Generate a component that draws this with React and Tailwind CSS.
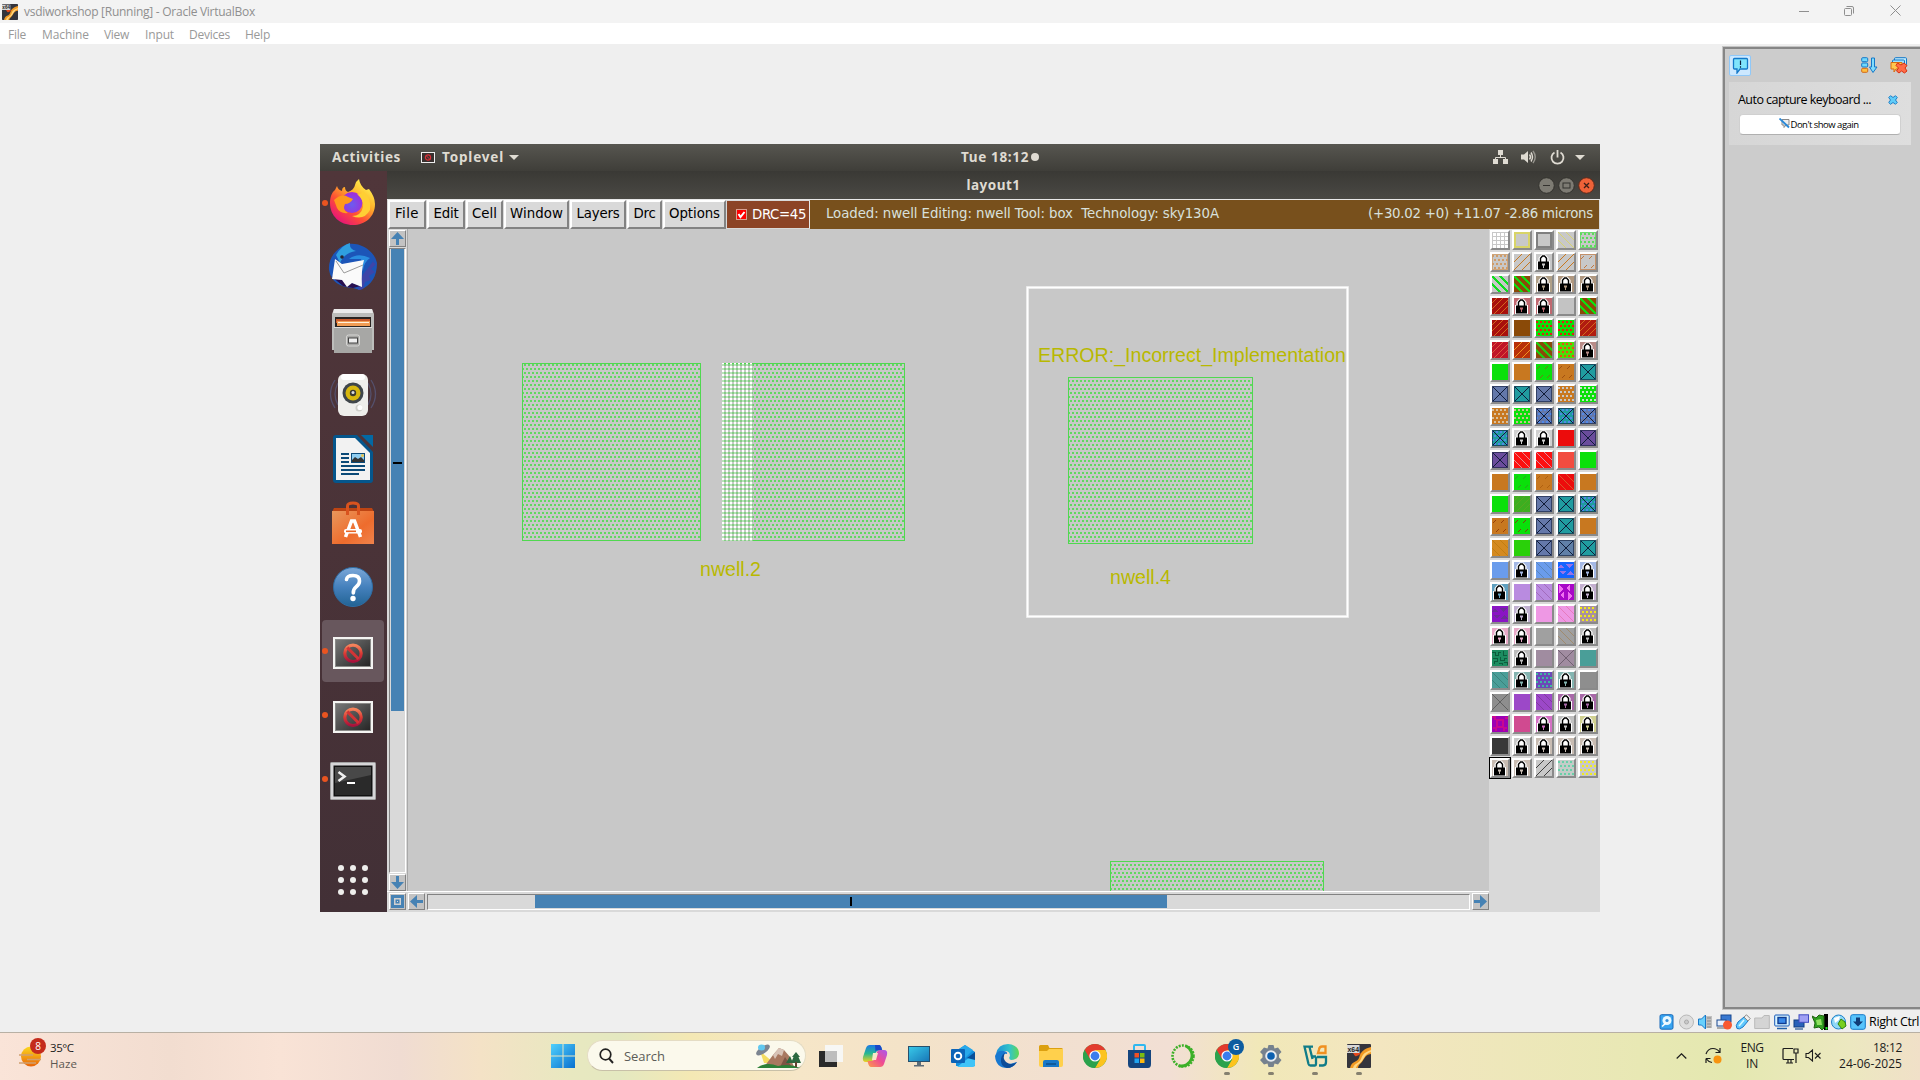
import React, { useLayoutEffect, useRef } from "react";

/* Text whose letter spacing is adjusted so that it fills a given width. */
function Fit({ w, className = "", children }) {
  const ref = useRef(null);
  useLayoutEffect(() => {
    const el = ref.current;
    el.style.letterSpacing = "0px";
    const natural = el.getBoundingClientRect().width;
    el.style.letterSpacing = (w - natural) / children.length + "px";
  }, [w, children]);
  return (
    <span ref={ref} className={"inline-block shrink-0 whitespace-pre " + className}>
      {children}
    </span>
  );
}

const segoe = "font-['Open_Sans',sans-serif]";
const ubuntu = "font-['Noto_Sans',sans-serif] font-bold";
const deja = "font-['DejaVu_Sans',sans-serif]";

/* ---------- small artwork ---------- */

function X64Icon({ size }) {
  return (
    <svg width={size} height={size} viewBox="0 0 24 24" className="shrink-0">
      <rect width="24" height="24" rx="1" fill="#34343c" />
      <path d="M3 24 C5 16 10 19 12 14 C14 7 17 5 24 3 V10 C17 11 18 15 14 19 C12 21 11 22 11 24Z" fill="#f29a24" />
      <path d="M6 24 C7 19 12 20 14 15 C16 9 19 8 24 6 V8 C18 10 18 13 15 17 C13 20 10 20 9 24Z" fill="#ffd884" />
      <path d="M6 9 H14 Q11 13 8 12Z" fill="#e3471c" />
      <rect x="0" y="1" width="12.5" height="8" fill="#d8d8d8" />
      <text x="0.5" y="8" fontSize="8" fontWeight="bold" fontFamily="Liberation Sans, sans-serif" textLength="11.5" lengthAdjust="spacingAndGlyphs" fill="#222">x64</text>
    </svg>
  );
}

function Prohibit() {
  return (
    <svg width="40" height="32" viewBox="0 0 40 32">
      <defs>
        <linearGradient id="scr" x1="0" y1="0" x2="1" y2="1">
          <stop offset="0" stopColor="#777" /><stop offset="1" stopColor="#262626" />
        </linearGradient>
        <linearGradient id="ban" x1="0" y1="0" x2="0" y2="1">
          <stop offset="0" stopColor="#f4845c" /><stop offset=".5" stopColor="#dc3b34" /><stop offset="1" stopColor="#a8123c" />
        </linearGradient>
      </defs>
      <rect width="40" height="32" fill="#f4f4f2" />
      <rect x="2" y="2" width="36" height="28" fill="#8a8a88" />
      <rect x="3" y="3" width="34" height="26" fill="url(#scr)" />
      <circle cx="20" cy="16.3" r="8.2" fill="none" stroke="url(#ban)" strokeWidth="3.2" />
      <path d="M14.3 10.6 L25.7 22" stroke="#d23436" strokeWidth="3" />
    </svg>
  );
}

const dockArt = {
  firefox: (
    <svg width="48" height="48" viewBox="1 1 48 48">
      <defs>
        <linearGradient id="ff" x1=".85" y1=".1" x2=".2" y2=".95">
          <stop offset="0" stopColor="#fff44f" /><stop offset=".35" stopColor="#ffb02a" /><stop offset=".65" stopColor="#ff5034" /><stop offset="1" stopColor="#e5127c" />
        </linearGradient>
        <radialGradient id="ffp" cx=".5" cy=".6" r=".6">
          <stop offset="0" stopColor="#6b5cf0" /><stop offset="1" stopColor="#a32bd8" />
        </radialGradient>
      </defs>
      <path d="M9 8 Q10 12 14 13 Q14 9 17 9 Q17 13 20 14 Q26 12 27 7 Q28 3 31 1 Q32 8 38 12 L41 11 Q47 19 47 26 C47 39 37 47 25 47 C12 47 2 38 2 25 C2 19 4 14 7 12 Q8 10 9 8Z" fill="url(#ff)" />
      <circle cx="24" cy="24.5" r="10.5" fill="url(#ffp)" />
      <path d="M6 22 Q14 15 20 19 L25 21 Q22 26 17 26 Q14 32 20 35 Q12 36 9 30Z" fill="#ff9a1c" />
      <path d="M29 16 Q36 22 35 29 Q33 38 24 38 Q36 43 42 32 Q44 20 35 13 Q33 17 29 16Z" fill="#ffcf34" />
    </svg>
  ),
  thunderbird: (
    <svg width="50" height="50" viewBox="0 0 50 50">
      <path d="M1 28 C3 40 12 45 25 46 L32 48 C44 43 49 34 49 21 C46 8 32 0 20 2 C8 6 0 16 1 28Z" fill="#1c55b8" />
      <path d="M49 14 L45 20 L48 22 L43 27 L47 30 L41 34 L43 38 L37 40 L35 47 L30 48 L34 34Z" fill="#3e45a8" />
      <path d="M3 34 L33 44 L25 46 L15 44Z" fill="#281050" />
      <path d="M8 13 Q14 3 22 1 Q21 7 28 9 Q16 11 12 21Z" fill="#2f9fe0" />
      <path d="M21 17 Q30 10 42 16 Q36 20 35 28 L33 17Z" fill="#2a8de0" />
      <path d="M7 17 L14 22 L36 18 Q33 28 34 45 L24 41 L19 45 L14 38 L4 37 Z" fill="#fafafa" />
      <path d="M8 19 L16 31 L35 23" fill="none" stroke="#9a9a9a" strokeWidth="1" />
      <circle cx="14" cy="15" r="1.8" fill="#2a2430" />
    </svg>
  ),
  files: (
    <svg width="42" height="46" viewBox="0 0 42 46">
      <path d="M2 1 H40 L42 6 V42 H0 V6Z" fill="#bdbdbb" />
      <path d="M2 1 H40 L41 5 H1Z" fill="#ecebeb" />
      <rect x="3" y="9" width="36" height="10" fill="#2a2422" />
      <rect x="4" y="11" width="34" height="4" fill="#c95a2c" />
      <rect x="5" y="13" width="33" height="5" fill="#f09c54" />
      <rect x="6" y="14" width="31" height="1" fill="#fff0dc" />
      <rect x="2" y="19" width="38" height="26" fill="#a7a7a5" />
      <rect x="2" y="19" width="38" height="1" fill="#ddd" />
      <rect x="14.500" y="27" width="13" height="11" rx="2" fill="#a7a7a5" stroke="#d6d6d4" />
      <rect x="16.500" y="30" width="9" height="5" fill="#eee" stroke="#444" />
    </svg>
  ),
  rhythmbox: (
    <svg width="48" height="46" viewBox="0 0 48 46">
      <path d="M6 8 Q-3 22 6 36 M42 8 Q51 22 42 36 M9 11 Q3 22 9 33 M39 11 Q45 22 39 33" fill="none" stroke="#54506c" strokeWidth="1.300" />
      <rect x="9" y="2" width="30" height="42" rx="6" fill="#eeeeeb" />
      <rect x="12" y="2" width="24" height="6" rx="3" fill="#fff" />
      <circle cx="24" cy="21" r="10.500" fill="#3f464a" />
      <circle cx="24" cy="21" r="7.500" fill="#d8b80e" />
      <circle cx="24" cy="21" r="3.200" fill="#3a3a32" />
      <circle cx="24" cy="20.500" r="1.500" fill="#ddd" />
      <circle cx="30" cy="36" r="3.500" fill="#cfcfca" />
      <circle cx="31" cy="35.500" r="2.600" fill="#fff" />
    </svg>
  ),
  writer: (
    <svg width="40" height="48" viewBox="0 0 40 48">
      <path d="M3 0 H24 L40 17 V45 Q40 48 37 48 H3 Q0 48 0 45 V3 Q0 0 3 0Z" fill="#05568c" />
      <path d="M28 0 H40 V12Z" fill="#0369a3" />
      <path d="M3 3 H22 L37 18 V45 H3Z" fill="#f2f2f2" />
      <path d="M8 19 H16 M8 23 H16 M8 27 H16 M8 31 H32 M8 35 H32 M8 39 H26" stroke="#0b4a78" strokeWidth="2" />
      <rect x="18" y="18" width="14" height="10" fill="#0b4a78" />
      <rect x="19" y="19" width="12" height="8" fill="#8fcdf0" />
      <path d="M19 27 V25 L22 22 L25 24 L28 22 L31 25 V27Z" fill="#333" />
      <circle cx="29.500" cy="20.500" r="1.500" fill="#e8c44c" />
    </svg>
  ),
  software: (
    <svg width="42" height="44" viewBox="0 0 42 44">
      <defs>
        <linearGradient id="bag" x1="0" y1="0" x2="1" y2="1">
          <stop offset="0" stopColor="#e9975c" /><stop offset=".6" stopColor="#ee6c2d" /><stop offset="1" stopColor="#f0834c" />
        </linearGradient>
      </defs>
      <path d="M2 7 H40 L42 11 H0Z" fill="#bd4413" />
      <rect y="10" width="42" height="33" fill="url(#bag)" />
      <path d="M15.500 14 V5 Q15.500 2 21 2 Q26.500 2 26.500 5 V14" fill="none" stroke="#d9531e" strokeWidth="3" />
      <path d="M13.500 36 L19.500 20 H22.500 L28.500 36" fill="none" stroke="#fff" strokeWidth="3.500" />
      <rect x="12" y="28" width="18" height="4.500" rx="2" fill="#fff" />
      <rect x="14" y="29.500" width="10" height="1.600" fill="#ea6424" />
    </svg>
  ),
  help: (
    <svg width="42" height="42" viewBox="0 0 42 42">
      <defs>
        <linearGradient id="hp" x1="0" y1="0" x2="0" y2="1">
          <stop offset="0" stopColor="#7ba7d8" /><stop offset=".5" stopColor="#4581bd" /><stop offset="1" stopColor="#226394" />
        </linearGradient>
      </defs>
      <circle cx="21" cy="21" r="19.500" fill="url(#hp)" stroke="#2e6da4" />
      <path d="M14.500 13.500 Q15 9.500 21 9.500 Q27.500 9.500 27.500 15 Q27.500 18.500 24 21 Q21.300 23 21.300 27" fill="none" stroke="#fff" strokeWidth="3.600" strokeLinecap="round" />
      <circle cx="21" cy="32.500" r="2.700" fill="#fff" />
    </svg>
  ),
  banned: <Prohibit />,
  terminal: (
    <svg width="46" height="38" viewBox="0 0 46 38">
      <rect width="46" height="38" rx="1.500" fill="#a3a3a3" />
      <rect x="1" y="1" width="44" height="36" fill="#d6d6d8" />
      <rect x="3.500" y="3.500" width="39" height="31" fill="#111" />
      <rect x="5" y="5" width="36" height="28" fill="#2a2a2a" />
      <path d="M5 5 H41 V13 L5 21Z" fill="#484848" />
      <path d="M8.500 10 L14.500 14.500 L8.500 19" fill="none" stroke="#f0f0f0" strokeWidth="2.600" />
      <path d="M17 21 H25" stroke="#fff" strokeWidth="2" />
    </svg>
  ),
};

const dockItems = [
  ["firefox", true], ["thunderbird"], ["files"], ["rhythmbox"], ["writer"], ["software"], ["help"],
  ["banned", true, true], ["banned", true], ["terminal", true],
];

function Dock() {
  return (
    <div className="flex w-[67px] shrink-0 flex-col bg-gradient-to-b from-[#50363a] via-[#4a3338] to-[#423036]">
      {dockItems.map(([kind, running, active], i) => (
        <div key={i} className="relative flex h-16 w-[66px] items-center justify-center">
          {active && <div className="absolute top-[1px] left-[2px] h-[62px] w-[62px] rounded-[4px] bg-[#68575d]" />}
          {running && <div className="absolute top-[29px] left-[2px] h-[6px] w-[6px] rounded-full bg-[#ea5420]" />}
          <div className={kind === "banned" || kind === "terminal" ? "relative pt-[3px]" : "relative"}>{dockArt[kind]}</div>
        </div>
      ))}
      <div className="mt-[54px] ml-[18px] grid w-[30px] grid-cols-3 gap-[6px]">
        {Array.from({ length: 9 }, (_, i) => (
          <div key={i} className="h-[6px] w-[6px] rounded-full bg-[#eeeeec]" />
        ))}
      </div>
    </div>
  );
}

/* ---------- layer palette ---------- */

const G = "#0ae00a", O = "#c87820", C = "#c8c8c8", B = "#6478aa", T = "#209ca0", R = "#a8100c", V = "#6a4c9c", BR = "#8a4a08", LB = "#c8bcb2";
const rows = [
  [["grid", C, "#fff"], ["box", C, "#d8d468"], ["box", C, "#808080"], ["bs", C, "#d8d468"], ["dotbox", C, "#5cdc5c"]],
  [["dotbox", C, "#d09c68"], ["fs2", C, O], ["lock", C], ["fs2", C, O], ["dashbox", C, "#c07840"]],
  [["bs2", C, "#10dc20"], ["bs2", BR, "#10dc10"], ["lock", "#b0a088"], ["lock", "#b09880"], ["lock", "#b09880"]],
  [["fs", R, "#d87020"], ["lock", "#c06870"], ["lock", "#c06870"], ["solid", "#c3c3c3"], ["bs2", BR, "#10dc10"]],
  [["fs", R, "#d87020"], ["solid", BR], ["dot", G, "#e02010"], ["dot", G, "#e02010"], ["fs", "#b01c10", "#d87020"]],
  [["fs", "#c01428", "#e06040"], ["fs2", "#b83008", "#f09020"], ["bs2", BR, "#20cc10"], ["dot", "#48e008", "#e85010"], ["lock", "#b88c88"]],
  [["solid", G], ["solid", O], ["dash", G, "#707818"], ["dash", O, "#a05010"], ["x", T]],
  [["x", B], ["x", T], ["x", B], ["dot", O, "#c8c8c8"], ["dot", G, "#c8e0c8"]],
  [["dot", O, "#d8c0a0"], ["dot", G, "#c8c090"], ["xd", B], ["xd", T], ["xd", B]],
  [["xd", T], ["lock", "#d0d0d0"], ["lock", "#d0d0d0"], ["solid", "#ec0c0c"], ["x", V]],
  [["x", V], ["bs", "#fc1010", "#e0a0a0"], ["bs", "#fc1010", "#d8a0b8"], ["solid", "#f24c40"], ["solid", G]],
  [["solid", O], ["dash", G, "#30a020"], ["dash", O, "#b06010"], ["bs", "#ec0c0c", "#d86030"], ["solid", O]],
  [["solid", G], ["fs", "#3cae20", "#58a820"], ["x", B], ["x", T], ["xd", T]],
  [["dash", O, "#984008"], ["dash", G, "#804010"], ["x", B], ["x", T], ["solid", O]],
  [["bs", "#d48a20", "#c07c10"], ["solid", "#2ad00a"], ["x", B], ["x", "#6080a8"], ["x", T]],
  [["solid", "#6a9cec"], ["lock", "#a4b8e4"], ["bs", "#6a9cec", "#5884b8"], ["tri", "#1464ff", "#9474e8"], ["lock", "#a4b8e4"]],
  [["lock", "#60a0c0"], ["solid", "#b98be0"], ["bs", "#b98be0", "#a068b8"], ["tri2", "#a808c8", "#f070f0"], ["lock", "#c4b0d0"]],
  [["tri", "#8a14c4", "#6c2c98"], ["lock", "#c0b0d0"], ["solid", "#ee98e4"], ["bs", "#ee98e4", "#e478b8"], ["dot", "#a890a0", "#f0e818"]],
  [["lock", "#e8a8c8"], ["lock", "#e8a8c8"], ["solid", "#a0a0a0"], ["bs", "#a0a0a0", "#a08868"], ["lock", "#bcbcbc"]],
  [["noise", "#1c8c60", "#0c5c3c"], ["lock", "#bcbcbc"], ["solid", "#a08ca0"], ["xs", "#a08ca0", "#706070"], ["solid", "#4a9e98"]],
  [["bs", "#4a9e98", "#388078"], ["lock", "#84b4b0"], ["dot", "#6c48b8", "#40b8a0"], ["lock", "#84b4b0"], ["solid", "#8e8e8e"]],
  [["xs", "#8e8e8e", "#606060"], ["solid", "#9c48c8"], ["bs", "#9c48c8", "#80389c"], ["lock", "#a868a8"], ["lock", "#a868a8"]],
  [["noise2", "#9c00b4", "#c80890"], ["solid", "#d04a90"], ["lock", "#d470c4"], ["lock", "#c0c0c0"], ["lock", "#d0d090"]],
  [["solid", "#383838"], ["lock", "#c8c8c8"], ["lock", LB], ["lock", LB], ["lock", LB]],
  [["lock", LB, "", true], ["lock", LB], ["fs2", C, "#404040"], ["dot", "#c4ccc8", "#68d0a8"], ["dot", C, "#f0ec20"]],
];

function dots(color) {
  const out = [];
  for (let r = 0; r < 4; r++)
    for (let c = 0; c < 4; c++) out.push(<rect key={r * 4 + c} x={c * 4 + (r % 2 ? 2 : 0)} y={r * 4 + 1} width="2" height="2" fill={color} />);
  return out;
}

const forward = "M-1 9 L9 -1 M-1 17 L17 -1 M7 17 L17 7";
const backward = "M-1 7 L9 17 M-1 -1 L17 17 M7 -1 L17 9";

function Swatch({ kind, bg, fg }) {
  let art = null;
  const dashes = <path d="M1 5 L4 2 M9 5 L12 2 M4 14 L7 11 M11 14 L14 11" stroke={fg} strokeWidth="1.200" />;
  if (kind === "grid") {
    art = [];
    for (let i = 0; i < 16; i++) art.push(<rect key={i} x={(i % 4) * 4 + 1} y={Math.floor(i / 4) * 4 + 1} width="3" height="3" fill={fg} />);
  } else if (kind === "box") art = <rect x="1" y="1" width="14" height="14" fill="none" stroke={fg} strokeWidth="2" />;
  else if (kind === "dot") art = dots(fg);
  else if (kind === "dotbox") art = <>{dots(fg)}<rect x=".5" y=".5" width="15" height="15" fill="none" stroke={fg} opacity=".8" /></>;
  else if (kind === "fs") art = <path d="M-1 6 L6 -1 M-1 12 L12 -1 M1 17 L17 1 M7 17 L17 7" stroke={fg} strokeWidth=".9" />;
  else if (kind === "fs2") art = <path d={forward} stroke={fg} strokeWidth="1.400" />;
  else if (kind === "bs") art = <path d={backward} stroke={fg} strokeWidth=".9" />;
  else if (kind === "bs2") art = <path d={backward} stroke={fg} strokeWidth="1.600" />;
  else if (kind === "dash") art = dashes;
  else if (kind === "dashbox") art = <>{dashes}<rect x=".5" y=".5" width="15" height="15" fill="none" stroke={fg} opacity=".7" /></>;
  else if (kind === "x" || kind === "xd") art = <>{kind === "xd" && dots("#5088e8")}<path d="M1 1 L15 15 M15 1 L1 15" stroke="#101c38" /><rect x=".5" y=".5" width="15" height="15" fill="none" stroke="#101c38" opacity=".6" /></>;
  else if (kind === "xs") art = <path d="M0 0 L16 16 M16 0 L0 16" stroke={fg} />;
  else if (kind === "tri") art = <path d="M0 6 L3 2 L6 6Z M8 2 H15 L11.500 6Z M2 9 H8 L5 13Z M9 13 L12 9 L16 13Z" fill={fg} />;
  else if (kind === "tri2") art = <path d="M1 1 L5 5 L1 9Z M12 1 V8 L8 4Z M6 8 V15 L2 11Z M10 8 L14 12 L10 16Z" fill={fg} />;
  else if (kind === "noise") art = <path d="M0 2 H3 V5 H6 V2 H9 M11 1 V5 H15 M1 8 H5 V11 H2 V14 M8 7 V10 H12 V8 H15 M7 13 H10 V15 M12 12 H15 V15" fill="none" stroke={fg} />;
  else if (kind === "noise2") art = <path d="M5 4 H11 V11 H5Z M0 1 H3 V4 M13 2 H16 M1 12 H4 V15 M12 15 V12 H15" fill="none" stroke={fg} strokeWidth="1.500" />;
  else if (kind === "lock")
    art = (
      <>
        <path d="M1 16 V7 H2.500 V4 L5.500 .5 H9.500 L12.500 4 V7 H14 V16Z" fill="#fff" />
        <path d="M4.500 8 V4.300 L6.500 2 H8.500 L10.500 4.300 V8" fill="none" stroke="#000" strokeWidth="1.400" />
        <rect x="2" y="7.500" width="11" height="8" fill="#000" />
        <path d="M6 9.500 H9 V11.500 H8 V14 H7 V11.500 H6Z" fill={bg} />
      </>
    );
  return (
    <svg width="16" height="16" viewBox="0 0 16 16" shapeRendering={kind === "lock" ? "auto" : "crispEdges"}>
      <rect width="16" height="16" fill={bg} />
      {art}
    </svg>
  );
}

function Palette() {
  return (
    <div className="w-[111px] shrink-0 bg-[#d9d9d9]">
      <div className="grid grid-cols-[repeat(5,22px)]">
        {rows.flat().map(([kind, bg, fg, sel], i) => (
          <div key={i} className={sel ? "h-[22px] border border-black" : "h-[22px] p-[1px]"}>
            <div className="flex h-[20px] w-[20px] items-center justify-center border-2 border-t-white border-l-white border-r-[#8a8a8a] border-b-[#8a8a8a]">
              <Swatch kind={kind} bg={bg} fg={fg} />
            </div>
          </div>
        ))}
      </div>
    </div>
  );
}

/* ---------- layout editor window ---------- */

const menus = [["File", 39, 24], ["Edit", 39, 25], ["Cell", 38, 25], ["Window", 66, 53], ["Layers", 57, 43], ["Drc", 36, 22], ["Options", 64, 51]];

function LayoutDrawing() {
  const cell = (x, y, w, h) => (
    <g>
      <rect x={x} y={y} width={w} height={h} fill="url(#nwell)" />
      <rect x={x + 0.5} y={y + 0.5} width={w - 1} height={h - 1} fill="none" stroke="#50d850" />
    </g>
  );
  const label = { fontFamily: "Liberation Sans, Arial, sans-serif", fontSize: 19.6, fill: "#b8b800" };
  return (
    <svg width="1081" height="662" viewBox="408 229 1081 662" className="block">
      <defs>
        <pattern id="nwell" patternUnits="userSpaceOnUse" width="4" height="8">
          <rect x="0" y="4" width="2" height="2" fill="#60d860" />
          <rect x="2" y="0" width="2" height="2" fill="#60d860" />
        </pattern>
        <pattern id="err" patternUnits="userSpaceOnUse" width="4" height="4">
          <rect x="0" y="0" width="4" height="2" fill="#84cc84" />
          <rect x="2" y="2" width="2" height="2" fill="#fff" />
          <rect x="2" y="0" width="2" height="2" fill="#fff" opacity=".45" />
        </pattern>
      </defs>
      <rect x="408" y="229" width="1081" height="662" fill="#c8c8c8" />
      <g shapeRendering="crispEdges">
        {cell(522, 363, 179, 178)}
        {cell(722, 363, 183, 178)}
        <rect x="722" y="363" width="31" height="178" fill="url(#err)" />
        {cell(1068, 377, 185, 167)}
        {cell(1110, 861, 214, 40)}
      </g>
      <rect x="1027.500" y="287.500" width="320" height="329" fill="none" stroke="#e4e4e4" strokeWidth="3" />
      <rect x="1027.500" y="287.500" width="320" height="329" fill="none" stroke="#fff" strokeWidth="1.500" />
      <text x="700" y="576" textLength="61" {...label}>nwell.2</text>
      <text x="1110" y="584" textLength="61" {...label}>nwell.4</text>
      <text x="1038" y="362" textLength="308" {...label}>ERROR:_Incorrect_Implementation</text>
      <path d="M729 569 h3 M1139 577 h3 M1189 356 h4 M1191 354 v4" stroke="#e8e020" strokeWidth="1.500" />
    </svg>
  );
}

function ArrowButton({ turn }) {
  return (
    <div className="flex h-[17px] w-[17px] shrink-0 items-center justify-center border border-t-white border-l-white border-r-[#828282] border-b-[#828282] bg-[#c3c3c3]">
      <svg width="13" height="13" viewBox="0 0 13 13" className={turn}>
        <path d="M6.500 0 L13 7 H8 V13 H5 V7 H0Z" fill="#4682b4" />
      </svg>
    </div>
  );
}

function EditorWindow() {
  return (
    <div className="flex h-[741px] min-w-0 flex-1 flex-col">
      <div className="grid h-7 grid-cols-[1fr_auto_1fr] items-center bg-gradient-to-b from-[#3a3935] to-[#4a4944]">
        <span />
        <span className="flex pb-[1px]"><Fit w={54} className={ubuntu + " text-[13.500px] leading-4 text-[#dfdbd2]"}>layout1</Fit></span>
        <div className="flex justify-end gap-[3px] pr-[5px]">
          <svg width="17" height="17" viewBox="0 0 17 17"><circle cx="8.500" cy="8.500" r="7.800" fill="#7d7b73" stroke="#33322e" /><path d="M5 8.500 H12" stroke="#33322e" /></svg>
          <svg width="17" height="17" viewBox="0 0 17 17"><circle cx="8.500" cy="8.500" r="7.800" fill="#7d7b73" stroke="#33322e" /><rect x="5" y="6" width="7" height="5" fill="none" stroke="#33322e" /></svg>
          <svg width="17" height="17" viewBox="0 0 17 17"><circle cx="8.500" cy="8.500" r="7.800" fill="#ee6238" stroke="#5c2a1c" /><path d="M6 6 L11 11 M11 6 L6 11" stroke="#3c2018" strokeWidth="1.300" /></svg>
        </div>
      </div>

      <div className={"flex h-[30px] border-t border-[#e8e8e8] bg-[#d9d9d9] pl-[1px] text-[13.330px] text-black " + deja}>
        {menus.map(([m, w, tw]) => (
          <div key={m} style={{ width: w }} className="shrink-0 pr-[1px]">
            <div className="flex h-[29px] items-center justify-center border-2 border-t-white border-l-white border-r-[#828282] border-b-[#828282] pb-[1px]">
              <Fit w={tw}>{m}</Fit>
            </div>
          </div>
        ))}
        <div className="mt-[1px] mb-[1px] flex w-[83px] shrink-0 items-center border-r border-[#e8e8e8] bg-[#8c4426] pl-[9px] text-white">
          <svg width="11" height="11" viewBox="0 0 11 11" className="mr-[5px]"><rect x=".5" y=".5" width="10" height="10" fill="#f00" stroke="#d8a090" /><path d="M2.500 5 L4.500 8 L8.500 3" fill="none" stroke="#fff" strokeWidth="2" /></svg>
          <Fit w={54}>DRC=45</Fit>
        </div>
        <div className="mr-[1px] flex flex-1 items-center justify-between bg-[#78501c] pr-[6px] pb-[1px] pl-[16px] text-[#d8e0dc]">
          <Fit w={393}>{"Loaded: nwell Editing: nwell Tool: box  Technology: sky130A"}</Fit>
          <Fit w={225}>(+30.02 +0) +11.07 -2.86 microns</Fit>
        </div>
      </div>

      <div className="flex min-h-0 flex-1">
        <div className="flex flex-col">
          <div className="flex h-[662px]">
            <div className="flex w-[21px] flex-col items-center border-r border-r-[#a8a8a8] bg-[#d9d9d9] pt-[1px]">
              <ArrowButton turn="" />
              <div className="my-[1px] flex h-[625px] w-[17px] flex-col border border-t-[#828282] border-r-white border-b-white border-l-[#828282] px-[1px]">
                <div className="flex h-[462px] items-center bg-[#4682b4] pb-[35px] pl-[2px]">
                  <div className="h-[2px] w-[9px] bg-black" />
                </div>
              </div>
              <ArrowButton turn="rotate-180" />
            </div>
            <LayoutDrawing />
          </div>
          <div className="flex h-[21px] items-start border-t border-white bg-[#d9d9d9] pt-[1px] pl-[2px]">
            <div className="flex h-[17px] w-[17px] items-center justify-center border border-t-white border-l-white border-r-[#828282] border-b-[#828282] bg-[#c3c3c3]">
              <svg width="13" height="13" viewBox="0 0 13 13"><rect x="1.500" y="1.500" width="10" height="10" fill="#d0d0d0" stroke="#4682b4" strokeWidth="3" /><rect x="4.500" y="4.500" width="4" height="4" fill="#4682b4" /><rect x="6" y="6" width="1" height="1" fill="#ddd" /></svg>
            </div>
            <div className="ml-[2px] flex"><ArrowButton turn="-rotate-90" /></div>
            <div className="mx-[2px] mt-[1px] flex h-[16px] w-[1043px] border border-t-[#828282] border-r-white border-b-white border-l-[#828282] pl-[107px]">
              <div className="flex h-[13px] w-[632px] items-center justify-center bg-[#4682b4]">
                <div className="h-[9px] w-[2px] bg-black" />
              </div>
            </div>
            <ArrowButton turn="rotate-90" />
          </div>
        </div>
        <Palette />
      </div>
    </div>
  );
}

function GuestDesktop() {
  return (
    <div className="mt-[100px] ml-[320px] flex h-[768px] w-[1280px] shrink-0 flex-col overflow-hidden bg-[#3c3b37]">
      <div className={"grid h-[27px] grid-cols-[641px_auto_1fr] items-center bg-gradient-to-b from-[#575650] to-[#3f3e39] pb-[1px] text-[13.500px] leading-4 text-[#dfdbd2] " + ubuntu}>
        <div className="flex items-center pl-[12px]">
          <Fit w={69}>Activities</Fit>
          <svg width="14" height="11" viewBox="0 0 14 11" className="ml-[20px]"><rect x=".5" y=".5" width="13" height="10" fill="#38302e" stroke="#eee" /><circle cx="7" cy="5.500" r="2.600" fill="none" stroke="#d83038" strokeWidth="1.200" /><path d="M5 3.500 L9 7.500" stroke="#d83038" /></svg>
          <Fit w={62} className="ml-[7px]">Toplevel</Fit>
          <svg width="10" height="5" viewBox="0 0 10 5" className="ml-[5px]"><path d="M0 0 H10 L5 5Z" fill="#dfdbd2" /></svg>
        </div>
        <div className="flex items-center">
          <Fit w={68}>Tue 18:12</Fit>
          <div className="ml-[2px] h-[8px] w-[8px] rounded-full bg-[#dfdbd2]" />
        </div>
        <div className="flex items-center justify-end pr-[15px]">
          <svg width="15" height="14" viewBox="0 0 15 14"><path d="M5 0 H10 V5 H5Z M0 9 H5 V14 H0Z M10 9 H15 V14 H10Z" fill="#dfdbd2" /><path d="M7.500 4 V7.500 M2.500 10 V7.500 H12.500 V10" fill="none" stroke="#dfdbd2" /></svg>
          <svg width="16" height="14" viewBox="0 0 16 14" className="ml-[13px]"><path d="M0 4.500 H3 L7 1 V13 L3 9.500 H0Z" fill="#dfdbd2" /><path d="M8.500 4.500 Q10.500 7 8.500 9.500 M10 2.500 Q13 7 10 11.500" fill="none" stroke="#dfdbd2" strokeWidth="1.400" /><path d="M12 1 Q16.500 7 12 13" fill="none" stroke="#96948d" strokeWidth="1.400" /></svg>
          <svg width="15" height="15" viewBox="0 0 15 15" className="ml-[13px]"><path d="M4.500 2.500 A6 6 0 1 0 10.500 2.500" fill="none" stroke="#dfdbd2" strokeWidth="1.800" /><path d="M7.500 0 V7.500" stroke="#dfdbd2" strokeWidth="1.800" /></svg>
          <svg width="10" height="5" viewBox="0 0 10 5" className="ml-[10px]"><path d="M0 0 H10 L5 5Z" fill="#dfdbd2" /></svg>
        </div>
      </div>
      <div className="flex h-[741px]">
        <Dock />
        <EditorWindow />
      </div>
    </div>
  );
}

/* ---------- notification centre ---------- */

function NotificationPanel() {
  return (
    <div className={"mt-[3px] ml-[123px] h-[962px] w-[197px] shrink-0 border-2 border-r-0 border-[#868686] bg-[#cccccc] shadow-[0_0_0_1px_#c4c4c4] " + segoe}>
      <div className="flex h-[33px] items-center pr-[12px] pl-[4px]">
        <div className="flex h-[21px] w-[22px] items-center justify-center rounded-[2px] border border-[#90c8f8] bg-[#cce8ff]">
          <svg width="17" height="17" viewBox="0 0 17 17"><path d="M1.500 2.500 Q1.500 1.500 2.500 1.500 H14.500 Q15.500 1.500 15.500 2.500 V11 Q15.500 12 14.500 12 H8 L5 16 V12 H2.500 Q1.500 12 1.500 11Z" fill="#80e4fc" stroke="#1478c8" strokeWidth="1.300" /><path d="M8.500 3.500 V8 M8.500 9.200 V10.700" stroke="#102040" strokeWidth="1.200" /></svg>
        </div>
        <span className="flex-1" />
        <svg width="17" height="17" viewBox="0 0 17 17"><rect x=".7" y=".7" width="6" height="4" rx="1" fill="#70d8fc" stroke="#1478c8" /><rect x=".7" y="6" width="6" height="4" rx="1" fill="#70d8fc" stroke="#1478c8" /><rect x=".7" y="11.300" width="6" height="4" rx="1" fill="#ffc040" stroke="#d06818" /><path d="M10.500 1 H13.500 V10 H16 L12 15.500 L8.500 10 H10.500Z" fill="#80dcfc" stroke="#1478c8" /></svg>
        <svg width="18" height="17" viewBox="0 0 18 17" className="ml-[12px]"><rect x="4.500" y=".7" width="12" height="8" rx="1" fill="#c0ecfc" stroke="#1478c8" /><rect x="2.500" y="3" width="12" height="8" rx="1" fill="#a0e0fc" stroke="#1478c8" /><path d="M1 5.500 H12 V12 H6 L4 15 V12 H1Z" fill="#ffc850" stroke="#d86c10" /><path d="M7.500 6 L11 8 L14 6 L17 8.500 L15 11 L17 14 L14.500 16 L11.500 14 L9 16 L6.500 14 L8.500 11 L6 8.500Z" fill="#ff6c48" stroke="#d83010" /></svg>
      </div>
      <div className="ml-[4px] h-[63px] w-[182px] bg-gradient-to-r from-[#d6d6d6] to-[#dedede] pt-[9px]">
        <div className="flex h-[18px] items-center pl-[9px] text-[12.500px] leading-4 text-black">
          <Fit w={133}>Auto capture keyboard ...</Fit>
          <svg width="10" height="10" viewBox="0 0 10 10" className="ml-[17px]"><path d="M2.500 .7 L5 2.500 L7.500 .7 L9.300 2.500 L7.500 5 L9.300 7.500 L7.500 9.300 L5 7.500 L2.500 9.300 L.7 7.500 L2.500 5 L.7 2.500Z" fill="#60ccf8" stroke="#2080c8" /></svg>
        </div>
        <div className="mt-[5px] ml-[10px] flex h-[21px] w-[162px] items-center justify-center rounded-[4px] border border-[#d0d0d0] border-b-[#b0b0b0] bg-white pt-[1px] pr-[3px] text-[9.500px] leading-3 text-black">
          <svg width="11" height="11" viewBox="0 0 11 11" className="mr-[1px] mb-[3px]"><path d="M3 1.500 H10 V7 H7 L5 9.500 V7 H3Z" fill="#eee" stroke="#888" /><path d="M.5 .5 L10 9.500" stroke="#2888d8" strokeWidth="1.800" /></svg>
          <Fit w={68}>Don't show again</Fit>
        </div>
      </div>
    </div>
  );
}

const S = ({ children }) => <svg width="16" height="16" viewBox="0 0 16 16" className="shrink-0">{children}</svg>;

function StatusStrip() {
  return (
    <div className={"flex h-[22px] shrink-0 items-center gap-[3.100px] pt-[2px] pl-[1659px] " + segoe}>
      <S><rect x="1" y=".7" width="13" height="14.500" rx="1.500" fill="#38a4f0" stroke="#1868b8" /><circle cx="8" cy="6.500" r="4.500" fill="#e8f8ff" /><circle cx="8" cy="6.500" r="1.600" fill="#3890d8" /><path d="M3 12.500 L7 9" stroke="#fff" strokeWidth="1.600" /></S>
      <S><circle cx="8.500" cy="8" r="7" fill="#dedede" stroke="#b8b8b8" /><circle cx="8.500" cy="8" r="2" fill="#c8c8c8" stroke="#aaa" /></S>
      <S><path d="M1.500 5 H4.500 L8.500 1 V15 L4.500 11 H1.500Z" fill="#68d0fc" stroke="#1878c8" /><path d="M9 2 H15 V14 H9Z" fill="#c0c0c0" /><path d="M10 4 H14 M10 7 H14 M10 10 H14 M10 13 H14" stroke="#888" /></S>
      <S><rect x="5" y="1" width="10" height="7" fill="#3878d0" stroke="#184890" /><rect x="1" y="6" width="9" height="6" fill="#e8f0fc" stroke="#184890" /><path d="M1 14 H9" stroke="#666" /><circle cx="11.500" cy="11" r="4.500" fill="#f85830" /></S>
      <S><path d="M2 14.500 Q0 12 3 8 L9 3 L13 7 L8 13 Q4 16 2 14.500Z" fill="#60c8fc" stroke="#1878c8" /><path d="M9 3 L11.500 .8 L15.200 4.500 L13 7Z" fill="#f0f0f0" stroke="#888" /><path d="M4 12 L9 6" stroke="#d8f8ff" strokeWidth="1.500" /></S>
      <S><path d="M.7 4 H8 L10 1.500 H15.300 V14.500 H.7Z" fill="#d4d4d4" stroke="#bababa" /></S>
      <S><rect x=".7" y="1" width="14.500" height="11" rx="1" fill="#d8f4ff" stroke="#1858b8" /><rect x="4" y="3.500" width="8" height="6" fill="#3888e8" stroke="#103c90" strokeWidth="1.400" /><path d="M3 14.500 H13" stroke="#2060a8" strokeWidth="1.500" /></S>
      <S><rect x="1" y="6" width="10" height="7" fill="#2860b8" stroke="#103c80" /><rect x="6" y=".8" width="9.500" height="7.500" fill="#a0a0f4" stroke="#404cc0" /><path d="M2 15 H10" stroke="#205090" strokeWidth="1.200" /></S>
      <S><rect x="12" y="0" width="4" height="16" fill="#000" /><rect x="13.500" y="13" width="2" height="2.500" fill="#20f020" /><path d="M0 2 L4 4 L7 1 L12 2 V14 L10 16 L7 13 L2 14 L3 9Z" fill="#30a020" stroke="#206010" /><path d="M4 6 L9 5 L10 11 L5 11Z" fill="#90e060" /></S>
      <S><circle cx="7.500" cy="8" r="7" fill="#90d8f8" stroke="#2080c8" /><path d="M3 4 L9 2 L8 6 L4 9Z" fill="#fff" /><path d="M7 10 L10 5 L14 8 L15 12 L11 15Z" fill="#78d020" stroke="#308010" /></S>
      <S><rect x=".7" y=".7" width="14.600" height="14.600" rx="2" fill="#58c4fc" stroke="#1478c8" /><path d="M6 3.500 H10 V7.500 H13 L8 12.500 L3 7.500 H6Z" fill="#103c78" /></S>
      <Fit w={50} className="text-[12.500px] leading-4 text-black">Right Ctrl</Fit>
    </div>
  );
}

/* ---------- host taskbar ---------- */

const Chrome = ({ size = 24 }) => (
  <svg width={size} height={size} viewBox="0 0 24 24">
    <circle cx="12" cy="12" r="12" fill="#2ba24c" />
    <path d="M12 12 L1.600 6 A12 12 0 0 1 22.400 6Z" fill="#e33b2e" />
    <path d="M12 6 H22.400 A12 12 0 0 1 12 24 L17.200 15Z" fill="#fcc31e" />
    <path d="M1.600 6 L6.800 15 L12 12 L12 6Z" fill="#e33b2e" />
    <path d="M1.600 6 A12 12 0 0 0 12 24 L17.200 15 L6.800 15Z" fill="#2ba24c" />
    <circle cx="12" cy="12" r="5.600" fill="#fff" /><circle cx="12" cy="12" r="4.400" fill="#3b7ded" />
  </svg>
);

const taskIcons = [
  <svg width="24" height="24" viewBox="0 0 24 24"><rect x="6" y="1" width="18" height="17" fill="#f7f7f5" /><rect x="0" y="7" width="18" height="16" fill="#2a2a2a" /><rect x="6" y="7" width="12" height="11" fill="#bdbdbd" /></svg>,
  <svg width="26" height="26" viewBox="0 -1 26 26">
    <defs><linearGradient id="cpa" x1="0" y1="0" x2="0" y2="1"><stop offset="0" stopColor="#1c78e8" /><stop offset=".5" stopColor="#28b890" /><stop offset="1" stopColor="#f0d020" /></linearGradient><linearGradient id="cpb" x1="1" y1="0" x2="0" y2="1"><stop offset="0" stopColor="#a858f0" /><stop offset=".5" stopColor="#f04c90" /><stop offset="1" stopColor="#fc9c48" /></linearGradient></defs>
    <path d="M8 1 H17 Q19 1 20 5 L20.500 7 H16 Q14 7 13 10 L11 16 Q10.500 18 8 18 H4 Q0 18 1 13 L4 4 Q5 1 8 1Z" fill="url(#cpa)" />
    <path d="M18 23 H9 Q7 23 6 19 L5.500 17 H10 Q12 17 13 14 L15 8 Q15.500 6 18 6 H22 Q26 6 25 11 L22 20 Q21 23 18 23Z" fill="url(#cpb)" />
    <path d="M13 1 H17 Q19 1 20 6 H16 Q14 6 13.500 8Z" fill="#1c48c8" />
    <path d="M11 9 H16 L14 16 H10Z" fill="#f8e8c8" />
  </svg>,
  <svg width="24" height="24" viewBox="0 -1 24 24"><defs><linearGradient id="mon" x1="0" y1="0" x2="1" y2="1"><stop offset="0" stopColor="#38c8e8" /><stop offset="1" stopColor="#1878b8" /></linearGradient></defs><rect x="1" y="1" width="22" height="16" fill="#28506c" /><rect x="2" y="2" width="20" height="14" fill="url(#mon)" /><path d="M10 17 H14 V20 H17 V21.500 H7 V20 H10Z" fill="#5c6c78" /></svg>,
  <svg width="25" height="24" viewBox="0 0 25 24"><path d="M5 7 L14 1 L24 8 V22 H5Z" fill="#1490df" /><path d="M8 5 L14 1 L22 6 L14 14Z" fill="#28a8ea" /><path d="M6 23 L24 9 V21 Q24 23 22 23Z" fill="#40c4f8" /><path d="M16 14 L24 8 V16Z" fill="#0a4f98" /><rect x="0" y="5" width="14" height="14" rx="1" fill="#0c64b8" /><circle cx="7" cy="12" r="3.300" fill="none" stroke="#fff" strokeWidth="1.900" /></svg>,
  <svg width="24" height="24" viewBox="0 0 24 24"><defs><linearGradient id="edg" x1="0" y1="0" x2="1" y2="0"><stop offset="0" stopColor="#1c90d8" /><stop offset=".6" stopColor="#34c4c8" /><stop offset="1" stopColor="#60d850" /></linearGradient></defs><path d="M1 10 Q3 0 13 0 Q24 1 24 10 Q23 16 16 16 Q13 15 15 12 Q15 7 10 7 Q4 7 1 10Z" fill="url(#edg)" /><path d="M0 12 Q2 6 9 7 Q13 8 12 10 Q8 9 7 14 Q8 20 15 20 L22 18 Q18 24 12 24 Q1 24 0 12Z" fill="#1878d0" /><path d="M10 9 Q7 14 11 18 Q16 22 22 18 Q18 24 12 24 Q5 22 6 15 Q7 10 10 9Z" fill="#0c4c98" /></svg>,
  <svg width="24" height="22" viewBox="0 0 24 22"><path d="M0 1.500 Q0 0 1.500 0 H9 L10.500 3 H22.500 Q24 3 24 4.500 V8 H0Z" fill="#dca010" /><path d="M0 6 H8 L10 4 H24 V20 Q24 22 22 22 H2 Q0 22 0 20Z" fill="#ffd04c" /><path d="M4 22 V17 Q4 15 6 15 H18 Q20 15 20 17 V22Z" fill="#1878c8" /><path d="M7 19 H17" stroke="#0c508c" strokeWidth="1.500" /></svg>,
  <Chrome />,
  <svg width="23" height="24" viewBox="0 0 23 24"><path d="M6 6 V2 Q6 1 7 1 H16 Q17 1 17 2 V6" fill="none" stroke="#30b8f0" strokeWidth="2" /><path d="M0 6 H23 V20 Q23 24 20 24 H3 Q0 24 0 20Z" fill="#15457e" /><rect x="6.500" y="9" width="4.500" height="4.500" fill="#f05024" /><rect x="12" y="9" width="4.500" height="4.500" fill="#7cbc10" /><rect x="6.500" y="14.500" width="4.500" height="4.500" fill="#20a4f0" /><rect x="12" y="14.500" width="4.500" height="4.500" fill="#fcb810" /></svg>,
  <svg width="24" height="24" viewBox="0 0 24 24"><circle cx="12" cy="12" r="10.500" fill="none" stroke="#3cb028" strokeWidth="2.600" strokeDasharray="2 1.200" /><path d="M15 2 A10.500 10.500 0 0 1 8 21.700" fill="none" stroke="#3cb028" strokeWidth="3" /></svg>,
  <span className="relative block"><Chrome /><span className="absolute -top-[5px] left-[13px] flex h-[16px] w-[16px] items-center justify-center rounded-full bg-[#0c5ca0] text-[9px] leading-none font-semibold text-white">G</span></span>,
  <svg width="24" height="24" viewBox="0 0 24 24"><path d="M9.500 1 H14.500 L15.500 4.500 L19 3.500 L22.500 8 L20 10.500 V13.500 L22.500 16 L19 20.500 L15.500 19.500 L14.500 23 H9.500 L8.500 19.500 L5 20.500 L1 16 L3.500 13.500 V10.500 L1 8 L5 3.500 L8.500 4.500Z" fill="#76828e" /><circle cx="12" cy="12" r="5.800" fill="#e8ecf0" /><circle cx="12" cy="12" r="3.800" fill="#0c60b0" /></svg>,
  <svg width="25" height="24" viewBox="0 0 25 24"><path d="M10 2.700 H1.500 L5.500 20 Q6 21.500 7.500 21.500 H12 Q13 21.500 13 20 V12.500 M6.500 3 L9.500 15 M9.500 12.500 H13" fill="none" stroke="#107c88" strokeWidth="2.300" /><path d="M15 9 L16 5.500 Q16.500 2.500 19 2.500 H22.500 V9Z" fill="none" stroke="#f09020" strokeWidth="2.300" /><path d="M14 13 H23 V18 Q23 21.500 20 21.500 H16" fill="none" stroke="#107c88" strokeWidth="2.300" /></svg>,
  <X64Icon size={24} />,
];

function Taskbar() {
  return (
    <div className={"flex h-12 shrink-0 items-center border-t border-[#b8b0a4] bg-[linear-gradient(90deg,#fae4d8_0px,#f2ddd0_170px,#f9e3d6_280px,#f0dcd2_400px,#f4e2c6_480px,#e8e8c0_570px,#e4e8c0_620px,#f4e8b4_690px,#f6e6c8_800px,#f4e3c8_900px,#f2e0d0_1050px,#f2dfd4_1170px,#f1e8b8_1260px,#f3e6c0_1380px,#e8e8b4_1640px,#e4e8b0_1730px,#ece8c0_1850px,#f0e0c8_1920px)] pb-[2px] " + segoe}>
      <div className="flex w-[551px] items-center pl-[19px] text-[11.500px] leading-4">
        <div className="relative h-[32px] w-[27px]">
          <svg width="24" height="24" viewBox="0 0 24 24" className="mt-[4px]"><defs><linearGradient id="sun" x1="0" y1="0" x2="0" y2="1"><stop offset="0" stopColor="#fcd820" /><stop offset="1" stopColor="#e86408" /></linearGradient></defs><circle cx="12" cy="12.500" r="10" fill="url(#sun)" /><path d="M0 11 H14 M8 15.500 H22 M0 19 H17" stroke="#d0a070" strokeWidth="1.700" /></svg>
          <span className="absolute -top-[2px] left-[11px] flex h-[16px] w-[16px] items-center justify-center rounded-full bg-[#c42b1c] text-[10px] leading-none text-white">8</span>
        </div>
        <div className="ml-[4px] flex flex-col">
          <Fit w={25} className="text-[#1c1c1c]">35°C</Fit>
          <Fit w={27} className="text-[#5c5852]">Haze</Fit>
        </div>
      </div>
      <svg width="24" height="24" viewBox="0 0 24 24"><defs><linearGradient id="win" x1="0" y1="0" x2="1" y2="1"><stop offset="0" stopColor="#50d0fc" /><stop offset="1" stopColor="#0870d0" /></linearGradient></defs><path d="M0 0 H11.500 V11.500 H0Z M12.500 0 H24 V11.500 H12.500Z M0 12.500 H11.500 V24 H0Z M12.500 12.500 H24 V24 H12.500Z" fill="url(#win)" /></svg>
      <div className="ml-[12px] flex h-[31px] w-[219px] items-center rounded-full border border-[#e4dcc4] border-b-[#c8c0a8] bg-[#fbf9ec] pl-[11px]">
        <svg width="15" height="16" viewBox="0 0 15 16"><circle cx="6.500" cy="6.500" r="5.300" fill="none" stroke="#222" strokeWidth="1.700" /><path d="M10 10.500 L14 15" stroke="#222" strokeWidth="1.900" /></svg>
        <Fit w={41} className="ml-[10px] text-[13px] leading-4 text-[#5c5c58]">Search</Fit>
        <svg width="46" height="26" viewBox="0 0 46 26" className="ml-[91px]">
          <path d="M4 8 L18 20 H8Z" fill="#f4dc60" />
          <ellipse cx="7" cy="7" rx="8" ry="3.500" transform="rotate(-35 7 7)" fill="#7c8490" /><ellipse cx="5.500" cy="4.500" rx="3.500" ry="3" fill="#60c8f0" />
          <path d="M8 24 L17 12 L23 5 L28 7 L34 14 L38 24Z" fill="#a87860" /><path d="M17 12 L23 5 L28 7 L26 13 L22 11 L19 16Z" fill="#d8c4b8" /><path d="M24 24 L29 14 L36 24Z" fill="#7c5444" />
          <path d="M1 25 Q10 18 22 23 Q34 20 44 25Z" fill="#2c8038" />
          <path d="M40 9 L44 14 L42.500 14 L45 20 H35 L37.500 14 H36Z M34 13 L37 20 H30Z" fill="#2c6840" /><path d="M40 19 V24" stroke="#604030" strokeWidth="2" />
        </svg>
      </div>
      <div className="ml-[3px] flex h-full">
        {taskIcons.map((icon, i) => (
          <div key={i} className="relative flex h-full w-[44px] items-center justify-center">
            {icon}
            {i > 8 && <div className="absolute bottom-[3px] left-1/2 h-[3px] w-[6px] -translate-x-1/2 rounded-full bg-[#85806f]" />}
          </div>
        ))}
      </div>
      <div className="ml-auto flex items-center pr-[18px] text-[12px] leading-4 text-[#1c1c1c]">
        <svg width="11" height="6" viewBox="0 0 11 6"><path d="M.7 5.500 L5.500 .8 L10.300 5.500" fill="none" stroke="#1c1c1c" strokeWidth="1.200" /></svg>
        <svg width="17" height="17" viewBox="0 0 17 17" className="ml-[18px]"><path d="M1 7 Q3 1.500 8 1.500 Q12 1.500 14.500 5 M15 1 V5.500 H10.500 M1 11.500 V16 M1 11.500 H5.500 M1.500 12 Q3.500 15 7 15.500" fill="none" stroke="#1c1c1c" strokeWidth="1.200" /><circle cx="12.500" cy="12.500" r="4" fill="#f79410" /></svg>
        <div className="ml-[17px] flex w-[26px] flex-col items-center"><Fit w={23}>ENG</Fit><Fit w={12}>IN</Fit></div>
        <svg width="17" height="17" viewBox="0 0 17 17" className="ml-[17px]"><path d="M11 1.500 H2 Q1 1.500 1 2.500 V11.500 Q1 12.500 2 12.500 H12 M4 16 H11 M6 13 V16 M9 13 V16" fill="none" stroke="#1c1c1c" strokeWidth="1.200" /><path d="M12 2 H16 V6 H12Z M14 6 V16" fill="none" stroke="#1c1c1c" strokeWidth="1.200" /></svg>
        <svg width="17" height="13" viewBox="0 0 17 13" className="ml-[6px]"><path d="M1 4.500 H3.500 L7.500 1 V12 L3.500 8.500 H1Z M10 4 L15.500 9.500 M15.500 4 L10 9.500" fill="none" stroke="#1c1c1c" strokeWidth="1.100" /></svg>
        <div className="ml-[17px] flex w-[63px] flex-col items-end"><Fit w={29}>18:12</Fit><Fit w={63}>24-06-2025</Fit></div>
      </div>
    </div>
  );
}

export default function App() {
  return (
    <div className="flex h-[1080px] w-[1920px] flex-col overflow-hidden bg-[#efefef]">
      <div className={"flex h-[23px] shrink-0 items-center bg-[#f3f3f3] pl-[2px] text-[12px] leading-4 text-[#8f8f8f] " + segoe}>
        <X64Icon size={16} />
        <Fit w={231} className="ml-[6px]">vsdiworkshop [Running] - Oracle VirtualBox</Fit>
        <div className="ml-auto flex items-center pr-[19px] pb-[2px]">
          <svg width="10" height="10" viewBox="0 0 10 10"><path d="M0 5.500 H10" stroke="#8f8f8f" /></svg>
          <svg width="10" height="10" viewBox="0 0 10 10" className="ml-[35px]"><rect x=".5" y="2.500" width="7" height="7" rx="1" fill="none" stroke="#8f8f8f" /><path d="M2.500 .5 H8 Q9.500 .5 9.500 2 V7.500" fill="none" stroke="#8f8f8f" /></svg>
          <svg width="11" height="11" viewBox="0 0 11 11" className="ml-[36px]"><path d="M.5 .5 L10.500 10.500 M10.500 .5 L.5 10.500" stroke="#8f8f8f" /></svg>
        </div>
      </div>
      <div className={"flex h-[21px] shrink-0 items-center bg-white pt-[3px] pb-[1px] pl-[8px] text-[12px] leading-4 text-[#999] " + segoe}>
        <div className="w-[34px]"><Fit w={18}>File</Fit></div>
        <div className="w-[62px]"><Fit w={47}>Machine</Fit></div>
        <div className="w-[41px]"><Fit w={25}>View</Fit></div>
        <div className="w-[44px]"><Fit w={29}>Input</Fit></div>
        <div className="w-[56px]"><Fit w={41}>Devices</Fit></div>
        <Fit w={25}>Help</Fit>
      </div>
      <div className="flex h-[966px] shrink-0">
        <GuestDesktop />
        <NotificationPanel />
      </div>
      <StatusStrip />
      <Taskbar />
    </div>
  );
}
